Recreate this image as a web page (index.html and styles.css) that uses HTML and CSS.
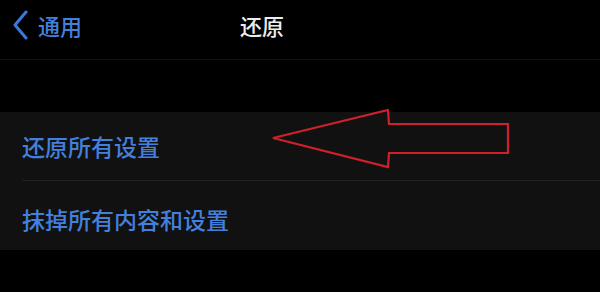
FILE: index.html
```html
<!DOCTYPE html>
<html lang="zh-CN">
<head>
<meta charset="utf-8">
<link rel="stylesheet" href="styles.css">
</head>
<body>
<div class="screen">
  <header class="nav">
    <a class="back">
      <svg class="chev" width="17" height="30" viewBox="0 0 17 30"><path d="M14 2 L3 15 L14 28" fill="none" stroke="#3a78dc" stroke-width="3" stroke-linecap="round" stroke-linejoin="round"/></svg>
      <span class="back-label">通用</span>
    </a>
    <h1 class="title">还原</h1>
  </header>
  <div class="spacer"></div>
  <ul class="group">
    <li class="row">还原所有设置
      <svg class="arrow" width="250" height="64" viewBox="0 0 250 64"><path d="M3 29 L118 1 L119 15 L238 15 L238 44 L119 44 L118 58 Z" fill="none" stroke="#d0202c" stroke-width="2.2" stroke-linejoin="miter"/></svg>
    </li>
    <li class="row last">抹掉所有内容和设置</li>
  </ul>
</div>
</body>
</html>
```
FILE: styles.css
```css
html, body {
  margin: 0;
  padding: 0;
  background: #000;
}
.screen {
  width: 600px;
  height: 292px;
  background: #000;
  font-family: "Noto Sans CJK SC", "Noto Sans", sans-serif;
  overflow: hidden;
}
.nav {
  height: 59px;
  display: flex;
  align-items: center;
  padding-left: 12px;
  border-bottom: 1px solid #111;
}
.back {
  display: flex;
  align-items: center;
  gap: 9px;
  color: #4380de;
  font-size: 22px;
  font-weight: 500;
  margin-top: -10px;
}
.chev {
  display: block;
}
.title {
  margin: -10px 0 0 158px;
  font-size: 22px;
  font-weight: 500;
  color: #ececec;
}
.spacer {
  height: 52px;
}
.group {
  list-style: none;
  margin: 0;
  padding: 0;
  background: #111111;
}
.row {
  position: relative;
  height: 69px;
  display: flex;
  align-items: center;
  margin-left: 22px;
  border-bottom: 1px solid #222224;
  color: #4380de;
  font-size: 23px;
  font-weight: 500;
  box-sizing: border-box;
}
.row.last {
  border-bottom: none;
  height: 69px;
  padding-top: 6px;
}
.arrow {
  position: absolute;
  left: 248px;
  top: -3px;
}
```
